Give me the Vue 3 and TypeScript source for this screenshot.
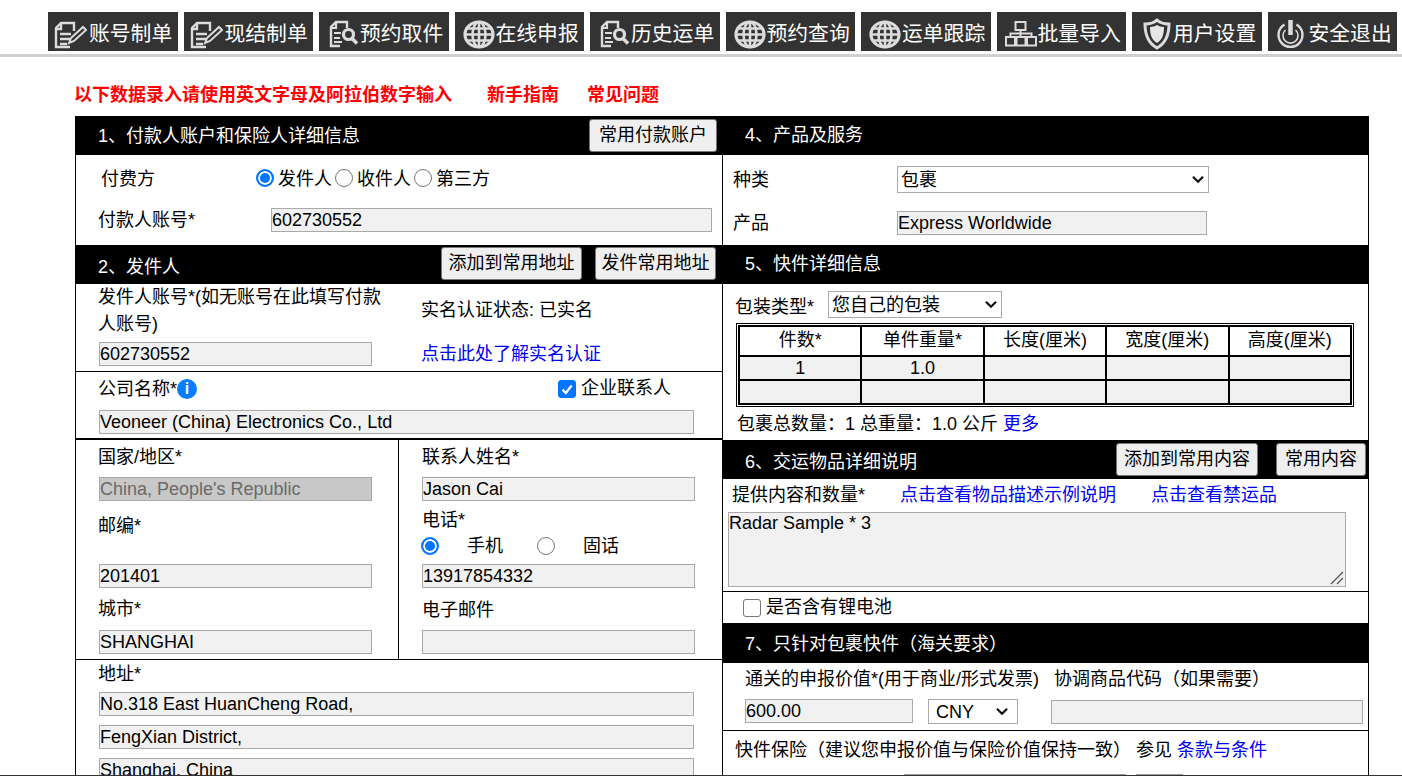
<script setup lang="ts">
const nav: { label: string; icon: string }[] = [
  { label: '账号制单', icon: 'doc' },
  { label: '现结制单', icon: 'doc' },
  { label: '预约取件', icon: 'search' },
  { label: '在线申报', icon: 'globe' },
  { label: '历史运单', icon: 'search' },
  { label: '预约查询', icon: 'globe' },
  { label: '运单跟踪', icon: 'globe' },
  { label: '批量导入', icon: 'tree' },
  { label: '用户设置', icon: 'shield' },
  { label: '安全退出', icon: 'power' },
]
const dims = ['件数*', '单件重量*', '长度(厘米)', '宽度(厘米)', '高度(厘米)']
</script>

<template>
  <div class="page">
    <header class="nav">
      <a v-for="n in nav" :key="n.label" class="nav-btn">
        <svg class="ico" viewBox="0 0 34 28" fill="none" stroke="#dcdcdc" stroke-width="2">
          <template v-if="n.icon === 'doc'">
            <path d="M15 26H1V7l5-5h13v8" stroke-width="2.4" />
            <path d="M6 2v6H1M5 13h11M5 18h10M5 23h7" stroke-width="2.4" />
            <path d="M14 22l2-5L28 6l3 3-12 11z" stroke-width="2" />
          </template>
          <template v-else-if="n.icon === 'search'">
            <path d="M14 25H5V6l5-5h11v6" stroke-width="2.4" />
            <path d="M10 1v6H5M8 12h7M8 17h6M8 21h8" stroke-width="2.2" />
            <circle cx="22.5" cy="13.5" r="5" stroke-width="3.2" />
            <path d="M26 17.5l5 5" stroke-width="3.6" />
          </template>
          <template v-else-if="n.icon === 'globe'">
            <ellipse cx="17" cy="13.5" rx="14" ry="12.5" stroke-width="3.2" />
            <ellipse cx="17" cy="13.5" rx="6.5" ry="12.5" stroke-width="2.6" />
            <path d="M17 1v25M5 7.5h24M3 13.5h28M5 19.5h24" stroke-width="2.6" />
          </template>
          <template v-else-if="n.icon === 'tree'">
            <path d="M11.5 1h10v8h-10zM2 16h9v8.500H2zM12.500 16h9v8.500h-9zM23 16h9v8.500h-9z" />
            <path d="M16.500 9v7M6.500 16v-3.500h21V16" />
          </template>
          <template v-else-if="n.icon === 'shield'">
            <path d="M18 -1c3 3 7 4 12 4 0 11-3 19-12 24C9 22 6 14 6 3c5 0 9-1 12-4z" stroke-width="3" />
            <path d="M18 4c2 1 4 2 7 2 0 8-2 13-7 16-5-3-7-8-7-16 3 0 5-1 7-2z" fill="#e6e6e6" stroke="none" />
          </template>
          <template v-else>
            <path d="M15.500 -1v15" stroke-width="4.500" />
            <path d="M9.500 3.500a12 12 0 1 0 12 0" stroke-width="2.400" />
            <path d="M10.500 9a7.500 7.500 0 1 0 10 0" stroke-width="1.600" />
          </template>
        </svg>
        <span>{{ n.label }}</span>
      </a>
    </header>

    <main class="content">
      <p class="notice">
        <span>以下数据录入请使用英文字母及阿拉伯数字输入</span>
        <span>新手指南</span>
        <span class="faq">常见问题</span>
      </p>

      <div class="columns">
        <section class="col col-left">
          <div class="bar bar-a">
            <h2>1、付款人账户和保险人详细信息</h2>
            <button class="btn b128">常用付款账户</button>
          </div>
          <div class="payer">
            <div class="pay-row">
              <span class="pay-label">付费方</span>
              <label class="radio-inline"><span class="radio on"></span>发件人</label>
              <label class="radio-inline"><span class="radio"></span>收件人</label>
              <label class="radio-inline"><span class="radio"></span>第三方</label>
            </div>
            <div class="acct-row">
              <span>付款人账号*</span>
              <div class="inp">602730552</div>
            </div>
          </div>

          <div class="bar bar-b">
            <h2 class="low">2、发件人</h2>
            <div class="btn-group">
              <button class="btn b141">添加到常用地址</button>
              <button class="btn b121">发件常用地址</button>
            </div>
          </div>
          <div class="shipper-acct">
            <div class="sa-left">
              <div class="sa-label">发件人账号*(如无账号在此填写付款人账号)</div>
              <div class="inp w273">602730552</div>
            </div>
            <div class="sa-right">
              <div>实名认证状态: 已实名</div>
              <a class="link">点击此处了解实名认证</a>
            </div>
          </div>

          <div class="company">
            <div class="co-head">
              <span class="co-name">公司名称*<i class="info">i</i></span>
              <label class="check-inline"><span class="check on">
                <svg viewBox="0 0 14 14"><path d="M3 7.500l3 3 5-6.500" fill="none" stroke="#fff" stroke-width="2" /></svg>
              </span>企业联系人</label>
            </div>
            <div class="inp w595">Veoneer (China) Electronics Co., Ltd</div>
          </div>

          <div class="contact-grid">
            <div class="cg-col cg-left">
              <div class="lab">国家/地区*</div>
              <div class="inp w273 disabled">China, People's Republic</div>
              <div class="lab zip">邮编*</div>
              <div class="inp w273">201401</div>
              <div class="lab city">城市*</div>
              <div class="inp w273">SHANGHAI</div>
            </div>
            <div class="cg-col cg-right">
              <div class="lab">联系人姓名*</div>
              <div class="inp w273">Jason Cai</div>
              <div class="lab tel">电话*</div>
              <div class="phone-type">
                <span class="radio on"></span><span class="pt">手机</span>
                <span class="radio"></span><span class="pt">固话</span>
              </div>
              <div class="inp w273">13917854332</div>
              <div class="lab mail">电子邮件</div>
              <div class="inp w273"></div>
            </div>
          </div>

          <div class="address">
            <div class="lab">地址*</div>
            <div class="inp w595">No.318 East HuanCheng Road,</div>
            <div class="inp w595">FengXian District,</div>
            <div class="inp w595">Shanghai, China</div>
          </div>
        </section>

        <section class="col col-right">
          <div class="bar bar-a raised">
            <h2>4、产品及服务</h2>
          </div>
          <div class="product">
            <div class="prod-row">
              <span>种类</span>
              <div class="sel w312">包裹<svg class="chev" viewBox="0 0 12 8"><path d="M1.500 1.500L6 6l4.500-4.500" fill="none" stroke="#111" stroke-width="2" /></svg></div>
            </div>
            <div class="prod-row">
              <span>产品</span>
              <div class="inp w310">Express Worldwide</div>
            </div>
          </div>

          <div class="bar bar-a2 raised">
            <h2>5、快件详细信息</h2>
          </div>
          <div class="pieces">
            <div class="pack-row">
              <span>包装类型*</span>
              <div class="sel w174">您自己的包装<svg class="chev" viewBox="0 0 12 8"><path d="M1.500 1.500L6 6l4.500-4.500" fill="none" stroke="#111" stroke-width="2" /></svg></div>
            </div>
            <table class="dims">
              <tbody>
                <tr class="head"><td v-for="d in dims" :key="d">{{ d }}</td></tr>
                <tr class="fill"><td>1</td><td>1.0</td><td></td><td></td><td></td></tr>
                <tr class="fill"><td></td><td></td><td></td><td></td><td></td></tr>
              </tbody>
            </table>
            <div class="totals">包裹总数量：1 总重量：1.0 公斤 <a class="link">更多</a></div>
          </div>

          <div class="bar bar-c">
            <h2>6、交运物品详细说明</h2>
            <div class="btn-group wide">
              <button class="btn b142">添加到常用内容</button>
              <button class="btn b90">常用内容</button>
            </div>
          </div>
          <div class="goods">
            <div class="goods-links">
              <span>提供内容和数量*</span>
              <a class="link l1">点击查看物品描述示例说明</a>
              <a class="link l2">点击查看禁运品</a>
            </div>
            <div class="area-wrap">
              <textarea class="area" readonly>Radar Sample * 3</textarea>
              <svg class="grip" viewBox="0 0 14 14"><path d="M13 1L1 13M13 7l-6 6" fill="none" stroke="#555" stroke-width="1.300" /></svg>
            </div>
          </div>
          <div class="lithium">
            <span class="check"></span>是否含有锂电池
          </div>

          <div class="bar bar-d">
            <h2>7、只针对包裹快件（海关要求）</h2>
          </div>
          <div class="customs">
            <div class="cu-labels">
              <span>通关的申报价值*(用于商业/形式发票)</span>
              <span>协调商品代码（如果需要）</span>
            </div>
            <div class="cu-inputs">
              <div class="inp w168">600.00</div>
              <div class="sel w90">CNY<svg class="chev" viewBox="0 0 12 8"><path d="M1.500 1.500L6 6l4.500-4.500" fill="none" stroke="#111" stroke-width="2" /></svg></div>
              <div class="inp w312b"></div>
            </div>
          </div>
          <div class="insurance">
            <div>快件保险（建议您申报价值与保险价值保持一致） 参见 <a class="link">条款与条件</a></div>
            <div class="ins-inputs"><span></span><span></span></div>
          </div>
        </section>
      </div>
    </main>
  </div>
</template>

<style>
html, body { margin: 0; background: #fff; overflow: hidden; }
</style>

<style scoped>
.page {
  width: 1402px;
  height: 776px;
  overflow: hidden;
  position: relative;
  font-family: "Liberation Sans", Arial, "Noto Sans CJK SC", sans-serif;
  font-size: 18px;
  color: #000;
  box-sizing: border-box;
  border-bottom: 1px solid #333;
}
.nav {
  height: 54px;
  box-sizing: border-box;
  padding: 12px 0 0 48px;
  display: flex;
  gap: 6px;
}
.nav-btn {
  width: 129.5px;
  height: 39px;
  background: #333;
  color: #fff;
  display: flex;
  align-items: center;
  padding-left: 7px;
  box-sizing: border-box;
  font-size: 20.800px;
  white-space: nowrap;
  flex: none;
}
.ico { width: 34px; height: 28px; flex: none; margin-top: 6px; overflow: visible; }
.content {
  border-top: 3px solid #d0d0d0;
  padding-left: 75px;
}
.notice {
  margin: 0 0 0 -1px;
  height: 59px;
  box-sizing: border-box;
  padding-top: 26px;
  font-size: 18px;
  line-height: 24px;
  font-weight: bold;
  color: #f00;
  display: flex;
  gap: 35px;
}
.notice .faq { margin-left: -7px; }
.columns { display: flex; width: 1294px; border-bottom: 1px solid #000; }
.col { box-sizing: border-box; }
.col-left { border-left: 1px solid #000; border-right: 1px solid #000; width: 648px; }
.col-right { border-right: 1px solid #000; width: 647px; margin-left: -1px; }
.bar {
  background: #000;
  color: #fff;
  display: flex;
  justify-content: space-between;
  align-items: center;
  box-sizing: border-box;
  padding-left: 23px;
  position: relative;
}
.col-left .bar { margin-left: -1px; }
.bar-a, .bar-a2, .bar-b, .bar-c { height: 39px; }
.bar-d { height: 40px; }
.bar h2 { margin: 0; font-size: 18px; font-weight: normal; line-height: 24px; }
.bar h2.low { padding-top: 4px; }
.raised h2 { margin-top: -2px; }
.bar-c h2 { margin-top: 4px; }
.bar-d h2 { margin-top: 2px; }
.btn {
  font: inherit;
  font-size: 18px;
  height: 33px;
  padding: 0;
  text-align: center;
  line-height: 31px;
  background: #efefef;
  color: #000;
  border: 1px solid #767676;
  border-radius: 3px;
  box-sizing: border-box;
  white-space: nowrap;
}
.bar-a .btn { margin-right: 5px; }
.b128 { width: 128px; }
.b141 { width: 141px; }
.b121 { width: 121px; }
.b142 { width: 142px; }
.b90 { width: 90px; }
.btn-group { display: flex; gap: 13px; margin-right: 6px; margin-top: -2px; }
.btn-group.wide { gap: 18px; margin-top: -1px; margin-right: 2px; }
.inp {
  height: 24px;
  box-sizing: border-box;
  background: #f1f1f1;
  border: 1px solid #a9a9a9;
  padding: 0;
  font-size: 18px;
  line-height: 22px;
  white-space: nowrap;
  overflow: hidden;
}
.inp.disabled { background: #c8c8c8; color: #6a6a6a; }
.sel {
  height: 27px;
  box-sizing: border-box;
  border: 1px solid #a9a9a9;
  padding: 0 3px;
  line-height: 26px;
  background: #fff;
  position: relative;
  white-space: nowrap;
}
.chev { position: absolute; right: 3px; top: 8px; width: 14px; height: 9px; }
.w273 { width: 273px; }
.w595 { width: 595px; }
.w312 { width: 312px; }
.w310 { width: 310px; }
.w174 { width: 174px; }
.w168 { width: 168px; }
.w90 { width: 90px; }
.w312b { width: 312px; }

.radio {
  display: inline-block;
  width: 18px;
  height: 18px;
  box-sizing: border-box;
  border: 1px solid #767676;
  border-radius: 50%;
  background: #fff;
  flex: none;
}
.radio.on { border: 2px solid #0075ff; box-shadow: inset 0 0 0 2px #fff; background: #0075ff; }
.check {
  display: inline-block;
  width: 18px;
  height: 18px;
  box-sizing: border-box;
  border: 1px solid #767676;
  border-radius: 3px;
  background: #fff;
  flex: none;
}
.check.on { background: #0075ff; border-color: #0075ff; }
.check svg { display: block; width: 100%; height: 100%; }

.payer { height: 90px; box-sizing: border-box; }
.pay-row { display: flex; align-items: center; height: 24px; padding: 11px 0 0 25px; }
.pay-label { width: 155px; padding-bottom: 2px; }
.radio-inline { display: flex; align-items: center; gap: 4px; margin-right: 3px; padding-bottom: 2px; }
.radio-inline .radio { margin-top: 2px; }
.acct-row { display: flex; align-items: center; padding: 18px 0 0 22px; }
.acct-row span { width: 173px; margin-top: -4px; }
.acct-row .inp { width: 441px; }

.shipper-acct {
  height: 88px;
  display: flex;
  box-sizing: border-box;
  padding: 0 0 0 23px;
  border-bottom: 1px solid #000;
}
.sa-left { width: 322px; }
.sa-label { width: 290px; line-height: 27px; height: 54px; margin-left: -1px; }
.sa-label + .inp { margin-top: 4px; }
.sa-right { display: flex; flex-direction: column; padding-top: 14px; gap: 20px; line-height: 24px; }
.link { color: #00e; text-decoration: none; }

.company {
  height: 68px;
  box-sizing: border-box;
  padding: 5px 0 0 23px;
  border-bottom: 2px solid #000;
}
.co-head { display: flex; justify-content: space-between; height: 24px; line-height: 24px; padding-right: 51px; margin-bottom: 9px; }
.co-name { display: flex; align-items: center; margin-left: -1px; }
.info {
  width: 20px;
  height: 20px;
  border-radius: 50%;
  background: #0a7cff;
  color: #fff;
  font-style: normal;
  font-weight: bold;
  font-size: 16px;
  line-height: 20px;
  text-align: center;
}
.check-inline { display: flex; align-items: center; gap: 5px; padding-bottom: 2px; }
.check-inline .check { margin-top: 2px; }

.contact-grid { display: flex; border-bottom: 1px solid #000; height: 220px; box-sizing: border-box; }
.cg-col { box-sizing: border-box; }
.cg-left { width: 323px; padding-left: 23px; border-right: 1px solid #000; }
.cg-left .lab { margin-left: -1px; }
.cg-right { padding-left: 23px; }
.lab { line-height: 24px; height: 24px; }
.cg-col > .lab:first-child { margin-top: 5px; margin-bottom: 8px; }
.zip { margin-top: 13px; margin-bottom: 26px; }
.city { margin: 9px 0; }
.mail { margin: 10px 0 8px; }
.tel { margin-top: 7px; }
.phone-type { display: flex; align-items: flex-start; height: 32px; padding-top: 5px; box-sizing: border-box; }
.phone-type .radio { margin-left: -1px; }
.phone-type .pt { margin: -3px 34px 0 28px; width: 36px; line-height: 24px; }
.phone-type .pt + .radio { margin-left: 0; }

.address { padding-left: 23px; }
.address .lab { margin: 2px 0 6px -1px; }
.address .inp { margin-bottom: 9px; }

.product { height: 90px; box-sizing: border-box; padding-top: 11px; }
.prod-row { display: flex; align-items: center; padding-left: 11px; height: 27px; margin-bottom: 16px; }
.prod-row > span { width: 164px; margin-top: -4px; }

.pieces { height: 156px; box-sizing: border-box; padding: 7px 0 0 13px; }
.pack-row { display: flex; align-items: center; gap: 14px; height: 27px; }
.dims {
  border-collapse: collapse;
  width: 614px;
  margin: 7px 0 0 3px;
  border: 2px solid #000;
  outline: 1px solid #000;
  outline-offset: 1px;
  table-layout: fixed;
}
.dims td { border: 2px solid #000; text-align: center; padding: 0; font-size: 18px; }
.dims .head td { height: 30px; line-height: 24px; vertical-align: top; padding-top: 1px; box-sizing: border-box; }
.dims .fill td { height: 22px; background: #f1f1f1; line-height: 22px; }
.totals { margin: 7px 0 0 2px; line-height: 24px; }

.goods { height: 113px; box-sizing: border-box; border-bottom: 1px solid #000; padding: 4px 0 0 6px; }
.goods-links { height: 24px; line-height: 24px; padding-left: 4px; display: flex; }
.goods-links .l1 { margin-left: 35px; }
.goods-links .l2 { margin-left: 35px; }
.area-wrap { position: relative; width: 618px; margin-top: 5px; }
.area {
  display: block;
  width: 618px;
  height: 75px;
  box-sizing: border-box;
  background: #f1f1f1;
  border: 1px solid #a9a9a9;
  font: inherit;
  color: #000;
  padding: 0;
  line-height: 21px;
  outline: none;
  border-radius: 0;
  resize: none;
}
.grip { position: absolute; right: 2px; bottom: 2px; width: 14px; height: 14px; }
.lithium { height: 31px; display: flex; align-items: center; gap: 5px; padding: 0 0 5px 21px; box-sizing: border-box; }
.lithium .check { margin-top: 5px; }

.customs { height: 68px; box-sizing: border-box; border-bottom: 1px solid #000; padding-left: 23px; }
.cu-labels { display: flex; gap: 15px; height: 24px; padding-top: 4px; line-height: 24px; }
.cu-inputs { display: flex; align-items: flex-start; margin-top: 8px; }
.cu-inputs .w90 { margin-left: 15px; width: 90px; height: 25px; padding-left: 7px; line-height: 24px; }
.cu-inputs .w90 .chev { top: 7px; right: 8px; }
.cu-inputs .w312b { margin: 1px 0 0 33px; }
.insurance { padding: 7px 0 0 13px; line-height: 24px; height: 46px; box-sizing: border-box; }
.ins-inputs { display: flex; gap: 10px; padding-left: 169px; margin-top: 12px; }
.ins-inputs span { display: block; height: 2px; background: #999; width: 222px; }
.ins-inputs span + span { width: 47px; }
</style>
